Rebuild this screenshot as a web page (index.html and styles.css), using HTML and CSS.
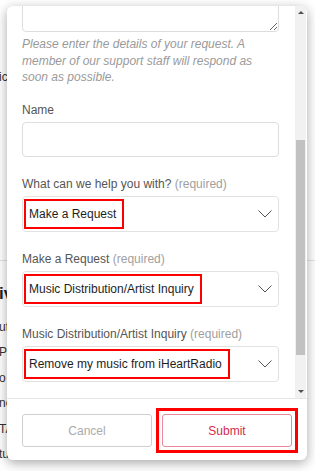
FILE: index.html
```html
<!DOCTYPE html>
<html lang="en">
<head>
    <meta charset="UTF-8">
    <meta name="viewport" content="width=device-width, initial-scale=1.0">
    <title>Contact Support</title>
    <link rel="stylesheet" href="styles.css">
</head>
<body>
    <div class="page">
        <p class="page-line first">ic</p>
        <hr class="page-rule">
        <h3 class="page-heading">iv</h3>
        <p class="page-line">ut</p>
        <p class="page-line">P</p>
        <p class="page-line">o</p>
        <p class="page-line">ne</p>
        <p class="page-line">TA</p>
        <p class="page-line">tu</p>
    </div>

    <div class="modal">
        <div class="modal-scroll">
            <div class="modal-body">
                <div class="form-inner">
                    <textarea class="details"></textarea>
                    <p class="help">Please enter the details of your request. A member of our support staff will respond as soon as possible.</p>

                    <div class="form-group">
                        <label for="name">Name</label>
                        <input type="text" id="name" class="text-input">
                    </div>

                    <div class="form-group">
                        <label>What can we help you with? <span class="req">(required)</span></label>
                        <div class="select">
                            <span class="marked">Make a Request</span>
                            <svg class="chevron" width="14" height="8" viewBox="0 0 14 8"><path d="M0.5 0.5 L7 7 L13.5 0.5" fill="none" stroke="#555" stroke-width="1"/></svg>
                        </div>
                    </div>

                    <div class="form-group">
                        <label>Make a Request <span class="req">(required)</span></label>
                        <div class="select">
                            <span class="marked">Music Distribution/Artist Inquiry</span>
                            <svg class="chevron" width="14" height="8" viewBox="0 0 14 8"><path d="M0.5 0.5 L7 7 L13.5 0.5" fill="none" stroke="#555" stroke-width="1"/></svg>
                        </div>
                    </div>

                    <div class="form-group">
                        <label>Music Distribution/Artist Inquiry <span class="req">(required)</span></label>
                        <div class="select">
                            <span class="marked">Remove my music from iHeartRadio</span>
                            <svg class="chevron" width="14" height="8" viewBox="0 0 14 8"><path d="M0.5 0.5 L7 7 L13.5 0.5" fill="none" stroke="#555" stroke-width="1"/></svg>
                        </div>
                    </div>

                    <div class="form-group">
                        <input type="text" class="text-input">
                    </div>
                </div>
            </div>
            <div class="scrollbar">
                <span class="arrow up"></span>
                <div class="track">
                    <div class="thumb"></div>
                </div>
                <span class="arrow down"></span>
            </div>
        </div>
        <div class="modal-footer">
            <button type="button" class="btn cancel">Cancel</button>
            <span class="mark-box">
                <button type="button" class="btn submit">Submit</button>
            </span>
        </div>
    </div>
</body>
</html>
```

FILE: styles.css
```css
body {
    margin: 0;
    font-family: 'Liberation Sans', Arial, sans-serif;
    background-color: #fff;
    color: #333;
    overflow: hidden;
}

/* page behind the dialog */
.page {
    height: 471px;
    overflow: hidden;
    margin-left: -1px;
    font-size: 12px;
}

.page-line {
    margin: 0;
    height: 25.5px;
    line-height: 16px;
}

.page-line.first {
    margin-top: 69px;
}

.page-rule {
    border: none;
    border-top: 1px solid #e3e3e3;
    margin: 165px 0 0;
}

.page-heading {
    margin: 23px 0 15px;
    font-size: 17px;
    line-height: 20px;
    color: #222;
}

/* dialog */
.modal {
    position: absolute;
    left: 7px;
    top: 6px;
    width: 300px;
    height: 454px;
    background-color: #fff;
    border-radius: 6px;
    box-shadow: 0 3px 12px rgba(0, 0, 0, 0.35);
    display: flex;
    flex-direction: column;
    overflow: hidden;
}

.modal-scroll {
    height: 392px;
    display: flex;
}

.modal-body {
    flex: 1;
    overflow: hidden;
    padding: 0 16px 0 15px;
}

.form-inner {
    margin-top: -54px;
}

.details {
    display: block;
    width: 100%;
    height: 80px;
    box-sizing: border-box;
    border: 1px solid #ddd;
    border-radius: 4px;
    margin: 0;
    resize: vertical;
}

.help {
    margin: 4px 0 0;
    font-size: 12px;
    line-height: 16.5px;
    font-style: italic;
    color: #9a9a9a;
}

.form-group {
    margin-top: 19px;
}

.form-group:first-of-type {
    margin-top: 16.5px;
}

label {
    display: block;
    font-size: 12px;
    line-height: 16px;
    color: #555;
    margin-bottom: 4px;
}

.req {
    color: #a0a0a0;
}

.text-input {
    display: block;
    width: 100%;
    height: 35px;
    box-sizing: border-box;
    border: 1px solid #ddd;
    border-radius: 4px;
    margin: 0;
}

.select {
    height: 36px;
    box-sizing: border-box;
    border: 1px solid #e2e2e2;
    border-radius: 4px;
    display: flex;
    align-items: center;
    justify-content: space-between;
    padding: 0 6px 0 1px;
}

.marked {
    border: 2px solid #f00;
    height: 30px;
    box-sizing: border-box;
    line-height: 26px;
    padding: 0 6px 0 3px;
    font-size: 12px;
    color: #1e1e1e;
    white-space: nowrap;
}

.chevron {
    display: block;
}

/* fake scrollbar */
.scrollbar {
    width: 11px;
    margin-right: 1px;
    background-color: #f1f1f1;
    display: flex;
    flex-direction: column;
    align-items: center;
}

.arrow {
    width: 0;
    height: 0;
    border-left: 3px solid transparent;
    border-right: 3px solid transparent;
    margin: 5px 0;
}

.arrow.up {
    border-bottom: 3px solid #505050;
}

.arrow.down {
    border-top: 3px solid #505050;
}

.track {
    flex: 1;
    width: 100%;
}

.thumb {
    margin-top: 121px;
    height: 215px;
    background-color: #c1c1c1;
    margin-left: 1px;
    margin-right: 1px;
}

/* footer */
.modal-footer {
    border-top: 1px solid #e6e6e6;
    padding: 15px 15px 13px;
    display: flex;
    gap: 10px;
}

.btn {
    height: 33px;
    box-sizing: border-box;
    padding: 0;
    background-color: #fff;
    border-radius: 3px;
    font-family: 'Liberation Sans', Arial, sans-serif;
    font-size: 12px;
    cursor: pointer;
}

.cancel {
    flex: 0 0 130px;
    border: 1px solid #cfcfcf;
    color: #ababab;
}

/* annotation box around the submit button */
.mark-box {
    flex: 0 0 auto;
    width: 130px;
    display: flex;
    margin: -6px;
    padding: 3px;
    border: 3px solid #f00;
}

.submit {
    width: 100%;
    border: 1px solid #e8899b;
    color: #d42a4d;
}
```
